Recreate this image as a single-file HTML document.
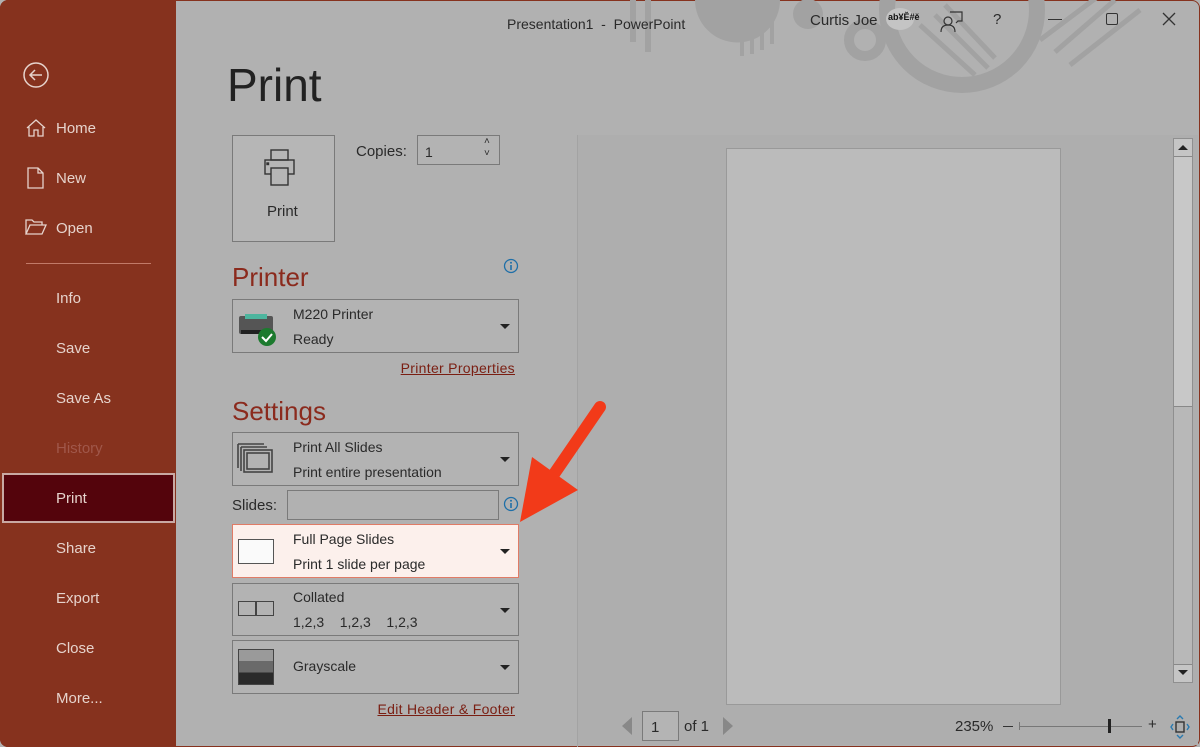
<!DOCTYPE html>
<html><head><meta charset="utf-8"><style>
*{margin:0;padding:0;box-sizing:border-box}
body{width:1200px;height:747px;overflow:hidden;background:#b1b1b1;font-family:"Liberation Sans",sans-serif;position:relative;color:#262626}
.a{position:absolute}
#side{left:0;top:0;width:176px;height:747px;background:#86321e;border-radius:8px 0 0 8px}
.nav{position:absolute;left:56px;font-size:15px;color:#e6d3cc}
.box{position:absolute;border:1px solid #7a7a7a;background:#b3b3b3}
.t{position:absolute;font-size:14px;color:#2a2a2a}
.dd{position:absolute;right:8px;top:50%;margin-top:-2px;border-left:5px solid transparent;border-right:5px solid transparent;border-top:5px solid #222}
.lnk{position:absolute;font-size:14px;color:#7a1e12;text-decoration:underline;text-align:right;width:300px}
</style></head><body>
<div class="a" style="left:0;top:0;width:1200px;height:747px;border:1px solid #86321e;border-radius:8px"></div>
<svg class="a" style="left:600px;top:0" width="600" height="100">
<g fill="#a2a2a2">
<rect x="30" y="0" width="6" height="42"/><rect x="45" y="0" width="6" height="52"/>
<path d="M95 0h85a42 42 0 0 1-85 0z"/>
<rect x="140" y="0" width="4" height="56"/><rect x="150" y="0" width="4" height="54"/><rect x="160" y="0" width="4" height="50"/><rect x="170" y="0" width="4" height="44"/>
<circle cx="208" cy="14" r="15"/>
</g>
<circle cx="265" cy="40" r="16" fill="none" stroke="#a2a2a2" stroke-width="10"/>
<circle cx="362" cy="10" r="75" fill="none" stroke="#a2a2a2" stroke-width="16"/>
<g stroke="#a2a2a2" stroke-width="5"><line x1="320" y1="25" x2="375" y2="75"/><line x1="335" y1="15" x2="388" y2="68"/><line x1="345" y1="5" x2="395" y2="58"/><line x1="440" y1="40" x2="500" y2="-5"/><line x1="455" y1="52" x2="515" y2="0"/><line x1="470" y1="65" x2="540" y2="10"/></g>
</svg>
<div id="side" class="a"></div>
<svg class="a" style="left:22px;top:61px" width="28" height="28"><circle cx="14" cy="14" r="12" fill="none" stroke="#e6d3cc" stroke-width="1.5"/><path d="M20 14H8M13 9l-5 5 5 5" fill="none" stroke="#e6d3cc" stroke-width="1.5"/></svg>
<svg class="a" style="left:25px;top:118px" width="22" height="20" fill="none" stroke="#e6d3cc" stroke-width="1.3"><path d="M2 10L11 2l9 8M4 8v10h5v-6h4v6h5V8"/></svg>
<svg class="a" style="left:27px;top:167px" width="18" height="22" fill="none" stroke="#e6d3cc" stroke-width="1.3"><path d="M1 1h10l5 5v15H1zM11 1v5h5"/></svg>
<svg class="a" style="left:25px;top:218px" width="22" height="18" fill="none" stroke="#e6d3cc" stroke-width="1.3"><path d="M1 16V2h6l2 2h8v3M1 16l4-9h16l-4 9z"/></svg>
<div class="nav" style="top:120px">Home</div>
<div class="nav" style="top:170px">New</div>
<div class="nav" style="top:220px">Open</div>
<div class="a" style="left:26px;top:263px;width:125px;height:1px;background:#c27a68"></div>
<div class="nav" style="top:290px">Info</div>
<div class="nav" style="top:340px">Save</div>
<div class="nav" style="top:390px">Save As</div>
<div class="nav" style="top:440px;color:#a0574a">History</div>
<div class="a" style="left:2px;top:473px;width:173px;height:50px;background:#54040c;border:2px solid #c9a9a3"></div>
<div class="nav" style="top:490px">Print</div>
<div class="nav" style="top:540px">Share</div>
<div class="nav" style="top:590px">Export</div>
<div class="nav" style="top:640px">Close</div>
<div class="nav" style="top:690px">More...</div>

<div class="t" style="left:507px;top:16px">Presentation1 &nbsp;-&nbsp; PowerPoint</div>
<div class="t" style="left:810px;top:12px;font-size:15px">Curtis Joe</div>
<div class="a" style="left:886px;top:8px;width:28px;height:22px;border-radius:50%;background:#c4c4c4"></div>
<div class="t" style="left:888px;top:12px;font-size:9px;font-weight:bold;color:#111">ab¥Ĕ#ě</div>
<svg class="a" style="left:940px;top:10px" width="24" height="24" fill="none" stroke="#333" stroke-width="1.2"><circle cx="8" cy="11" r="4"/><path d="M1 22c0-5 3-7 7-7s7 2 7 7M10 2h12v9h-4l-2 2"/></svg>
<div class="t" style="left:993px;top:11px;font-size:15px">?</div>
<div class="a" style="left:1048px;top:19px;width:14px;height:1px;background:#333"></div>
<div class="a" style="left:1106px;top:13px;width:12px;height:12px;border:1.3px solid #333;border-radius:2px"></div>
<svg class="a" style="left:1162px;top:12px" width="14" height="14" stroke="#333" stroke-width="1.3"><path d="M1 1l12 12M13 1L1 13"/></svg>

<div class="a" style="left:227px;top:58px;font-size:46px;color:#222;font-weight:300">Print</div>
<div class="box" style="left:232px;top:135px;width:103px;height:107px;background:#b6b6b6"></div>
<svg class="a" style="left:263px;top:148px" width="40" height="40" fill="none" stroke="#333" stroke-width="1.4"><rect x="8" y="2" width="17" height="10"/><rect x="2" y="12" width="29" height="14"/><rect x="8" y="20" width="17" height="17" fill="#b6b6b6"/><rect x="4" y="15" width="1.5" height="1.5" fill="#333"/></svg>
<div class="t" style="left:267px;top:203px;font-size:15px">Print</div>
<div class="t" style="left:356px;top:143px;font-size:15px">Copies:</div>
<div class="box" style="left:417px;top:135px;width:83px;height:30px"></div>
<div class="t" style="left:425px;top:144px">1</div>
<div class="t" style="left:484px;top:136px;font-size:10px">˄</div><div class="t" style="left:484px;top:148px;font-size:10px">˅</div>

<div class="a" style="left:232px;top:262px;font-size:26px;color:#8b2a1d">Printer</div>
<svg class="a" style="left:503px;top:258px" width="16" height="16"><circle cx="8" cy="8" r="6.5" fill="none" stroke="#1f6fa8" stroke-width="1.3"/><rect x="7.2" y="7" width="1.6" height="5" fill="#1f6fa8"/><circle cx="8" cy="4.8" r="1" fill="#1f6fa8"/></svg>
<div class="box" style="left:232px;top:299px;width:287px;height:54px"><div class="dd"></div></div>
<svg class="a" style="left:237px;top:310px" width="42" height="38"><rect x="2" y="6" width="34" height="18" rx="2" fill="#555"/><rect x="8" y="4" width="22" height="5" fill="#4db59e"/><rect x="4" y="20" width="24" height="4" fill="#222"/><circle cx="30" cy="27" r="9" fill="#1c7a2e"/><path d="M25 27l4 4 6-7" fill="none" stroke="#fff" stroke-width="2"/></svg>
<div class="t" style="left:293px;top:306px">M220 Printer</div>
<div class="t" style="left:293px;top:331px">Ready</div>
<div class="lnk" style="left:215px;top:360px;letter-spacing:0.3px">Printer Properties</div>

<div class="a" style="left:232px;top:396px;font-size:26px;color:#8b2a1d">Settings</div>
<div class="box" style="left:232px;top:432px;width:287px;height:54px"><div class="dd"></div></div>
<svg class="a" style="left:237px;top:443px" width="38" height="32" fill="none" stroke="#444" stroke-width="1.6"><path d="M1 1h26M1 1v24"/><path d="M4 4h26M4 4v24"/><rect x="7" y="7" width="28" height="22"/><rect x="10" y="10" width="22" height="16"/></svg>
<div class="t" style="left:293px;top:439px">Print All Slides</div>
<div class="t" style="left:293px;top:464px">Print entire presentation</div>
<div class="t" style="left:232px;top:497px;font-size:15px">Slides:</div>
<div class="box" style="left:287px;top:490px;width:212px;height:30px;background:#b1b1b1"></div>
<svg class="a" style="left:503px;top:496px" width="16" height="16"><circle cx="8" cy="8" r="6.5" fill="none" stroke="#1f6fa8" stroke-width="1.3"/><rect x="7.2" y="7" width="1.6" height="5" fill="#1f6fa8"/><circle cx="8" cy="4.8" r="1" fill="#1f6fa8"/></svg>
<div class="box" style="left:232px;top:524px;width:287px;height:54px;background:#fcf0ec;border-color:#e07b66"><div class="dd"></div></div>
<div class="a" style="left:238px;top:539px;width:36px;height:25px;border:1.5px solid #555;background:#fafafa"></div>
<div class="t" style="left:293px;top:531px">Full Page Slides</div>
<div class="t" style="left:293px;top:556px">Print 1 slide per page</div>
<div class="box" style="left:232px;top:583px;width:287px;height:53px"><div class="dd"></div></div>
<div class="a" style="left:238px;top:601px;width:36px;height:15px;border:1.5px solid #444"></div>
<div class="a" style="left:255px;top:601px;width:2px;height:15px;background:#444"></div>
<div class="t" style="left:293px;top:589px">Collated</div>
<div class="t" style="left:293px;top:614px">1,2,3 &nbsp;&nbsp;&nbsp;1,2,3 &nbsp;&nbsp;&nbsp;1,2,3</div>
<div class="box" style="left:232px;top:640px;width:287px;height:54px"><div class="dd"></div></div>
<div class="a" style="left:238px;top:649px;width:36px;height:36px;border:1px solid #444;background:linear-gradient(#9a9a9a 0 33%,#6a6a6a 33% 66%,#2a2a2a 66%)"></div>
<div class="t" style="left:293px;top:658px">Grayscale</div>
<div class="lnk" style="left:215px;top:701px;letter-spacing:0.3px">Edit Header &amp; Footer</div>

<div class="a" style="left:577px;top:135px;width:1px;height:612px;background:#a3a3a3"></div>
<div class="a" style="left:578px;top:135px;width:620px;height:610px;background:#aeaeae"></div>
<div class="a" style="left:726px;top:148px;width:335px;height:557px;background:#bbb;border:1px solid #999"></div>
<div class="a" style="left:1173px;top:138px;width:20px;height:545px;background:#b8b8b8;border:1px solid #8f8f8f"></div>
<div class="a" style="left:1174px;top:139px;width:18px;height:18px;border-bottom:1px solid #888;background:#c5c5c5"></div>
<div class="a" style="left:1178px;top:145px;border-left:5px solid transparent;border-right:5px solid transparent;border-bottom:5px solid #222"></div>
<div class="a" style="left:1174px;top:157px;width:18px;height:250px;background:#c8c8c8;border-bottom:1px solid #888"></div>
<div class="a" style="left:1174px;top:664px;width:18px;height:18px;border-top:1px solid #888;background:#c5c5c5"></div>
<div class="a" style="left:1178px;top:670px;border-left:5px solid transparent;border-right:5px solid transparent;border-top:5px solid #222"></div>

<div class="a" style="left:622px;top:717px;border-top:9px solid transparent;border-bottom:9px solid transparent;border-right:10px solid #888"></div>
<div class="box" style="left:642px;top:711px;width:37px;height:30px;background:#b4b4b4"></div>
<div class="t" style="left:651px;top:719px;font-size:15px">1</div>
<div class="t" style="left:684px;top:718px;font-size:15px">of 1</div>
<div class="a" style="left:723px;top:717px;border-top:9px solid transparent;border-bottom:9px solid transparent;border-left:10px solid #888"></div>
<div class="t" style="left:955px;top:718px;font-size:15px">235%</div>
<div class="a" style="left:1003px;top:726px;width:10px;height:1px;background:#333"></div>
<div class="a" style="left:1020px;top:726px;width:122px;height:1px;background:#777"></div>
<div class="a" style="left:1019px;top:722px;width:1px;height:8px;background:#777"></div>
<div class="a" style="left:1108px;top:719px;width:3px;height:14px;background:#222"></div>
<div class="t" style="left:1148px;top:716px;font-size:15px">+</div>
<svg class="a" style="left:1170px;top:715px" width="20" height="24" fill="none" stroke="#2a7ab0" stroke-width="1.4"><rect x="6" y="7" width="8" height="10" stroke="#333"/><path d="M7 4l3-3 3 3M7 20l3 3 3-3M3 9l-2 3 2 3M17 9l2 3-2 3"/></svg>

<svg class="a" style="left:500px;top:395px" width="120" height="140"><line x1="100" y1="12" x2="52" y2="82" stroke="#f23a19" stroke-width="12" stroke-linecap="round"/><polygon points="20,127 32,62 78,95" fill="#f23a19"/></svg>
</body></html>
